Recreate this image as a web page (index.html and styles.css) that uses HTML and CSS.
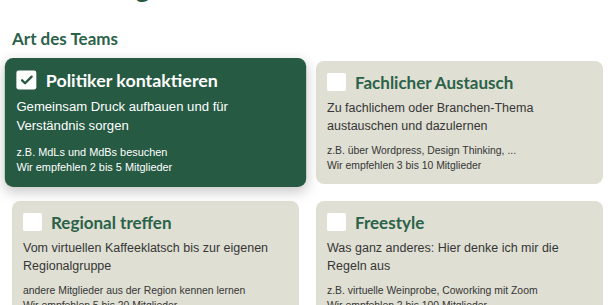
FILE: index.html
```html
<!DOCTYPE html>
<html lang="de">
<head>
    <meta charset="UTF-8">
    <meta name="viewport" content="width=device-width, initial-scale=1.0">
    <title>Team gründen</title>
    <link rel="stylesheet" href="styles.css">
</head>
<body>
    <div class="page">
        <h1 class="page-title">Anmeldung</h1>
        <h2 class="section-title">Art des Teams</h2>
        <div class="team-grid">
            <label class="team-card selected">
                <div class="card-head">
                    <span class="box">
                        <svg viewBox="0 0 20 20" width="14" height="14"><path d="M3.5 10.5l4 4 9-9" fill="none" stroke="#265a43" stroke-width="3.2" stroke-linecap="round" stroke-linejoin="round"/></svg>
                    </span>
                    <span class="card-title">Politiker kontaktieren</span>
                </div>
                <p class="card-desc">Gemeinsam Druck aufbauen und für Verständnis sorgen</p>
                <p class="card-note">z.B. MdLs und MdBs besuchen<br>Wir empfehlen 2 bis 5 Mitglieder</p>
            </label>
            <label class="team-card">
                <div class="card-head">
                    <span class="box"></span>
                    <span class="card-title">Fachlicher Austausch</span>
                </div>
                <p class="card-desc">Zu fachlichem oder Branchen-Thema austauschen und dazulernen</p>
                <p class="card-note">z.B. über Wordpress, Design Thinking, ...<br>Wir empfehlen 3 bis 10 Mitglieder</p>
            </label>
            <label class="team-card">
                <div class="card-head">
                    <span class="box"></span>
                    <span class="card-title">Regional treffen</span>
                </div>
                <p class="card-desc">Vom virtuellen Kaffeeklatsch bis zur eigenen Regionalgruppe</p>
                <p class="card-note">andere Mitglieder aus der Region kennen lernen<br>Wir empfehlen 5 bis 20 Mitglieder</p>
            </label>
            <label class="team-card">
                <div class="card-head">
                    <span class="box"></span>
                    <span class="card-title">Freestyle</span>
                </div>
                <p class="card-desc">Was ganz anderes: Hier denke ich mir die Regeln aus</p>
                <p class="card-note">z.B. virtuelle Weinprobe, Coworking mit Zoom<br>Wir empfehlen 2 bis 100 Mitglieder</p>
            </label>
        </div>
    </div>
</body>
</html>
```

FILE: styles.css
```css
:root {
    --green: #265a43;
    --title-green: #2b6249;
    --beige: #dfdfd3;
    --text: #363636;
}
body {
    margin: 0;
    background: #ffffff;
    font-family: Lato, "Liberation Sans", sans-serif;
    color: var(--text);
    overflow: hidden;
}
.page {
    padding: 0 7px 0 12px;
}
.page-title {
    margin: -29px 0 21px 0;
    font-size: 27px;
    line-height: 34px;
    color: var(--green);
}
.section-title {
    margin: 0 0 12px 0;
    font-size: 17px;
    line-height: 20px;
    padding-top: 3px;
    color: var(--title-green);
}
.team-grid {
    display: grid;
    grid-template-columns: 1fr 1fr;
    gap: 17px;
}
.team-card {
    display: block;
    background: var(--beige);
    border-radius: 8px;
    padding: 12px 11px 11px;
    cursor: pointer;
}
.team-card.selected {
    background: var(--green);
    color: #ffffff;
    transform: scale(1.05);
    box-shadow: 0 4px 12px rgba(0, 0, 0, 0.22);
}
.card-head {
    display: flex;
    align-items: center;
    gap: 9px;
    height: 18px;
}
.box {
    width: 19px;
    height: 18px;
    background: #ffffff;
    border-radius: 2px;
    display: flex;
    align-items: center;
    justify-content: center;
}
.card-title {
    font-size: 17px;
    font-weight: bold;
    color: var(--title-green);
}
.selected .card-title {
    color: #ffffff;
}
.card-desc {
    margin: 8px 0 0 0;
    font-family: "Liberation Sans", Arial, sans-serif;
    font-size: 12.5px;
    line-height: 18px;
}
.card-note {
    margin: 8px 0 0 0;
    font-family: "Liberation Sans", Arial, sans-serif;
    font-size: 10.4px;
    line-height: 15px;
}
```
